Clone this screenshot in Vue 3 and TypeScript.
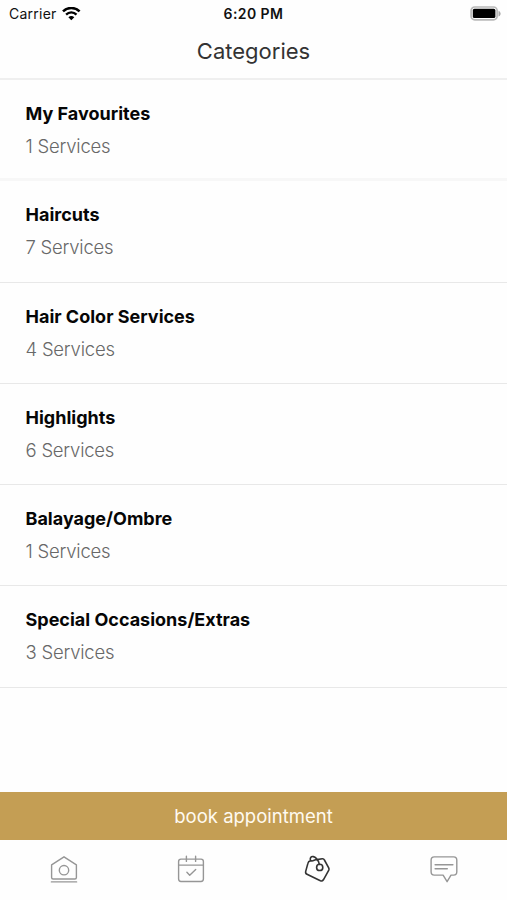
<script setup lang="ts">
interface Category {
  name: string
  count: number
}

const categories: Category[] = [
  { name: 'My Favourites', count: 1 },
  { name: 'Haircuts', count: 7 },
  { name: 'Hair Color Services', count: 4 },
  { name: 'Highlights', count: 6 },
  { name: 'Balayage/Ombre', count: 1 },
  { name: 'Special Occasions/Extras', count: 3 },
]
</script>

<template>
  <div class="screen">
    <div class="status">
      <div class="carrier">
        <span>Carrier</span>
        <svg width="19" height="14" viewBox="0 0 19 14" fill="none" stroke="#000">
          <path d="M1 4.3C5.4-.1 13.2-.1 17.6 4.3" stroke-width="2.5" />
          <path d="M4.1 7.6c2.9-2.9 7.5-2.9 10.4 0" stroke-width="2.3" />
          <path d="M6.4 10.2c1.7-1.6 4.2-1.6 5.9 0L9.3 13.3z" fill="#000" stroke="none" />
        </svg>
      </div>
      <span class="time">6:20 PM</span>
      <svg class="battery" width="31" height="16" viewBox="0 0 31 16">
        <rect x="1.1" y="1" width="26" height="12.8" rx="3.6" fill="#fff" stroke="#b9b9b9" stroke-width="1.7" />
        <rect x="2.8" y="2.8" width="22.6" height="9.2" rx="1.6" fill="#000" />
        <path d="M28.8 5.2c2 .8 2 4.2 0 5z" fill="#aaa" stroke="#aaa" stroke-width=".6" />
      </svg>
    </div>
    <header class="header"><h1>Categories</h1></header>
    <main class="list">
      <section v-for="c in categories" :key="c.name" class="row">
        <h2>{{ c.name }}</h2>
        <p>{{ c.count }} Services</p>
      </section>
    </main>
    <button class="book" type="button">book appointment</button>
    <nav class="tabs">
      <a class="tab nudged">
        <svg width="30" height="30" viewBox="0 0 30 30">
          <path d="M2.6 9.9 15 1.8l12.4 8.1v12.6a1.5 1.5 0 0 1-1.5 1.5H4.1a1.5 1.5 0 0 1-1.5-1.5zM2.4 26.9h25.2" />
          <circle cx="15" cy="15.2" r="4.7" />
        </svg>
      </a>
      <a class="tab nudged">
        <svg width="30" height="30" viewBox="0 0 30 30">
          <rect x="2.6" y="4.1" width="24.8" height="22.4" rx="2.4" />
          <path d="M2.6 10.1h24.8M10.4 1.2v5.2M19.6 1.2v5.2M10.9 17.3l2.8 2.9 6-5.7" />
        </svg>
      </a>
      <a class="tab active">
        <svg width="30" height="30" viewBox="0 0 30 30">
          <path d="M8.4 5.9Q6.3 6.2 5.9 8.4L3.7 16.4q-.5 2 1.3 2.9l13.4 6.4q1.9.8 3-.9l5.4-9.6q.5-1-.1-2.3L22.4 5q-.6-1.4-2.2-1.2L15 4.6" />
          <path d="M17.3 9.4C16.8 7 16.2 5.3 14.5 3.6 12.5 1.4 9.9.9 8.9 2.3c-1 1.4-.8 3.3.6 3.6 1.8.4 3-1.2 5.3-1.4" />
          <circle cx="17.7" cy="12.4" r="3.1" />
        </svg>
      </a>
      <a class="tab">
        <svg width="30" height="30" viewBox="0 0 30 30">
          <path d="M5.3 1.9h19.3q3.2 0 3.2 3.3v11.6q0 3.3-3.2 3.3h-2.6l-3.9 6.6-4-6.6H5.3q-3.2 0-3.2-3.3V5.2q0-3.3 3.2-3.3zM6.1 9.7h17.8M6.1 13.7h12.2" />
        </svg>
      </a>
    </nav>
  </div>
</template>

<style>
body {
  margin: 0;
  background: #fefefe;
}
</style>

<style scoped>
.screen {
  width: 507px;
  height: 900px;
  display: flex;
  flex-direction: column;
  overflow: hidden;
  background: #fefefe;
  font-family: Inter, "Liberation Sans", sans-serif;
}
.status {
  height: 27px;
  flex: none;
  display: grid;
  grid-template-columns: 1fr auto 1fr;
  align-items: center;
  padding: 0 6px 0 9px;
  box-sizing: border-box;
  color: #111;
}
.carrier {
  display: flex;
  align-items: center;
  gap: 5px;
  font-size: 14px;
  letter-spacing: 0.25px;
}
.time {
  margin-right: 3px;
  font-size: 14px;
  font-weight: 600;
  letter-spacing: 0.42px;
}
.battery {
  justify-self: end;
}
.header {
  height: 53px;
  flex: none;
  box-sizing: border-box;
  border-bottom: 2px solid #efefef;
  display: flex;
  justify-content: center;
}
h1 {
  margin: 8px 0 0;
  font-size: 22px;
  line-height: 32px;
  font-weight: 400;
  color: #333;
}
.list {
  height: 711.5px;
  flex: none;
}
.row {
  height: 101.3px;
  box-sizing: border-box;
  padding: 22px 25.5px 0;
  border-bottom: 1px solid #e8e8e8;
}
.row:first-child {
  border-bottom: 3px solid #f7f7f7;
}
h2 {
  margin: 0;
  font-size: 18px;
  line-height: 24px;
  font-weight: 700;
  color: #060606;
}
.row p {
  margin: 4px 0 0;
  font-size: 18.5px;
  line-height: 32px;
  font-weight: 300;
  letter-spacing: -0.22px;
  color: #686868;
}
.book {
  height: 48.5px;
  flex: none;
  border: 0;
  padding: 0;
  background: #c49e54;
  color: #fffaf0;
  font: 400 18.5px/48px Inter, "Liberation Sans", sans-serif;
}
.tabs {
  display: grid;
  grid-template-columns: repeat(4, 1fr);
  padding-top: 15px;
}
.tab {
  display: flex;
  justify-content: center;
}
.tab.nudged {
  padding-left: 2px;
}
.tab svg {
  fill: none;
  stroke: #969696;
  stroke-width: 1.4;
  stroke-linecap: round;
  stroke-linejoin: round;
}
.tab.active svg {
  stroke: #333;
  stroke-width: 1.6;
}
</style>
